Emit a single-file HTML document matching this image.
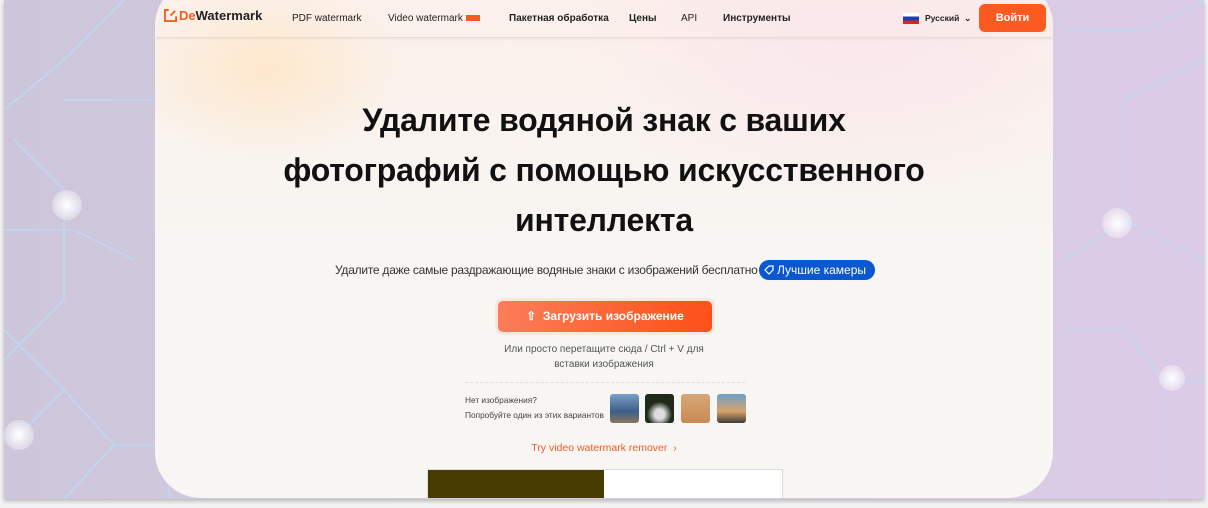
<!DOCTYPE html>
<html><head><meta charset="utf-8"><style>
*{margin:0;padding:0;box-sizing:border-box}
body{width:1208px;height:508px;overflow:hidden;background:#f2f2f2;font-family:"Liberation Sans",sans-serif;position:relative}
.outer{position:absolute;left:4px;top:0;width:1200px;height:499px;background:linear-gradient(90deg,#cdc6da 0%,#d6cde2 50%,#dccbe6 100%);overflow:hidden;box-shadow:0 2px 4px rgba(0,0,0,.25)}
.card{position:absolute;left:151px;top:-20px;width:898px;height:518px;border-radius:46px;background:#f7f6f3;overflow:hidden}
.glow{position:absolute;left:0;top:0;width:898px;height:300px;background:radial-gradient(ellipse 140px 90px at 110px 90px,rgba(255,228,190,.7),transparent),radial-gradient(ellipse 300px 160px at 700px 60px,rgba(250,228,234,.8),transparent),linear-gradient(#fcf0ea,#f7f6f3)}
.nav{position:absolute;top:20px;left:0;width:898px;height:38px;border-bottom:1px solid #eadcd5;box-shadow:0 1px 3px rgba(0,0,0,.06)}
.nav span{position:absolute;top:13px;font-size:10px;color:#222}
h1{position:absolute;top:115px;left:0;width:898px;text-align:center;font-size:32px;line-height:50px;font-weight:bold;color:#111;letter-spacing:-0.2px}
.sub{position:absolute;top:283px;left:180px;font-size:12px;color:#333;letter-spacing:-0.25px}
.pill{position:absolute;top:280px;left:604px;width:116px;height:20px;border-radius:10px;background:#0b57d0;color:#fff;font-size:12px;line-height:20px;padding-left:18px}
.btn{position:absolute;top:321px;left:343px;width:214px;height:31px;border-radius:5px;background:linear-gradient(90deg,#fb7d59,#fd5018);color:#fff;font-weight:bold;font-size:12px;line-height:31px;text-align:center;box-shadow:0 0 0 3px rgba(253,120,90,.12)}
.hint{position:absolute;top:362px;left:0;width:898px;text-align:center;font-size:10px;line-height:15px;color:#555}
.sep{position:absolute;top:402px;left:310px;width:280px;border-top:1px dashed #ddd}
.try{position:absolute;top:413px;left:310px;font-size:8.3px;line-height:15px;color:#444}
.th{position:absolute;top:414px;width:29px;height:29px;border-radius:3px}
.vid{position:absolute;top:462px;left:0;width:898px;text-align:center;font-size:10.5px;color:#f05a2a}
.demo{position:absolute;top:489px;left:272px;width:356px;height:40px;border:1px solid #ddd;background:#fff}
</style></head><body>
<div class="outer">
<svg width="1200" height="499" style="position:absolute;left:0;top:0" fill="none" stroke="#b8dcf6" stroke-width="1.3">
<path d="M0 110 L60 60 L120 0"/><path d="M10 140 L60 190 L60 300 L0 360"/><path d="M10 440 L60 390 L110 445 L150 445"/><path d="M60 390 L0 330"/><path d="M110 445 L60 499"/><path d="M165 400 L165 499"/>
<path d="M0 230 L70 230 L130 260"/><path d="M60 100 L150 100"/>
<path d="M1200 60 L1120 100 L1120 220 L1200 260"/><path d="M1060 30 L1140 30 L1200 0"/><path d="M1060 330 L1120 330 L1160 380 L1200 380"/><path d="M1160 380 L1160 499"/><path d="M1120 220 L1060 260"/>
</svg>
<div style="position:absolute;left:48px;top:190px;width:30px;height:30px;border-radius:50%;background:radial-gradient(#fff,rgba(255,255,255,0))"></div>
<div style="position:absolute;left:1098px;top:208px;width:30px;height:30px;border-radius:50%;background:radial-gradient(#fff,rgba(255,255,255,0))"></div>
<div style="position:absolute;left:0px;top:420px;width:30px;height:30px;border-radius:50%;background:radial-gradient(#fff,rgba(255,255,255,0))"></div>
<div style="position:absolute;left:1155px;top:365px;width:26px;height:26px;border-radius:50%;background:radial-gradient(#fff,rgba(255,255,255,0))"></div>
<div class="card"><div class="glow"></div>
<div class="nav">
<svg style="position:absolute;left:9px;top:9px" width="13" height="13" viewBox="0 0 14 14" fill="none" stroke="#f55a1e" stroke-width="2"><path d="M5 1H1v12h12V8"/><path d="M7 7l5-5"/></svg>
<span style="left:24px;top:8px;font-size:13px;font-weight:bold;color:#222"><b style="color:#f55a1e">De</b>Watermark</span>
<span style="left:137px">PDF watermark</span>
<span style="left:233px">Video watermark <i style="display:inline-block;width:14px;height:6px;background:#f55a1e;vertical-align:middle"></i></span>
<span style="left:354px;font-weight:bold">Пакетная обработка</span>
<span style="left:474px;font-weight:bold">Цены</span>
<span style="left:526px">API</span>
<span style="left:568px;font-weight:bold">Инструменты</span>
<div style="position:absolute;left:748px;top:13px;width:16px;height:11px;background:linear-gradient(#fff 33%,#1c3fb5 33% 66%,#d52b1e 66%)"></div>
<span style="left:770px;font-size:8.5px;font-weight:bold;top:13px">Русский &nbsp;⌄</span>
<div style="position:absolute;left:824px;top:4px;width:67px;height:28px;border-radius:6px;background:#fd5a22;color:#fff;font-weight:bold;font-size:11px;text-align:center;line-height:28px">Войти</div>
</div>
<h1>Удалите водяной знак с ваших<br>фотографий с помощью искусственного<br>интеллекта</h1>
<div class="sub">Удалите даже самые раздражающие водяные знаки с изображений бесплатно</div>
<div class="pill"><svg style="position:absolute;left:5px;top:5px" width="10" height="10" viewBox="0 0 10 10" fill="none" stroke="#fff" stroke-width="1.2"><path d="M5 1h4v4L5 9 1 5z"/></svg>Лучшие камеры</div>
<div class="btn">⇧ &nbsp;Загрузить изображение</div>
<div class="hint">Или просто перетащите сюда / Ctrl + V для<br>вставки изображения</div>
<div class="sep"></div>
<div class="try">Нет изображения?<br>Попробуйте один из этих вариантов</div>
<div class="th" style="left:455px;background:linear-gradient(#7aa0c8,#3c5f87 60%,#8a7460)"></div>
<div class="th" style="left:490px;background:radial-gradient(circle at 50% 70%,#ddd 20%,#1f2a1c 50%)"></div>
<div class="th" style="left:526px;background:linear-gradient(#d7a77a,#c98a52)"></div>
<div class="th" style="left:562px;background:linear-gradient(#6f9fc8,#d8a36c 60%,#3d3a3a)"></div>
<div class="vid">Try video watermark remover &nbsp;›</div>
<div class="demo"><div style="width:176px;height:100%;background:#463c00"></div></div>
</div>
</div>
</body></html>
